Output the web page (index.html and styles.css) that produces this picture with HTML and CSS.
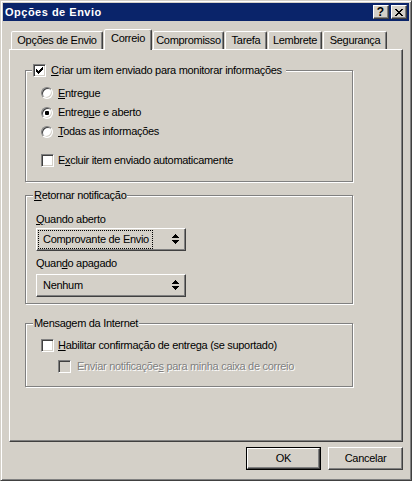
FILE: index.html
```html
<!DOCTYPE html>
<html>
<head>
<meta charset="utf-8">
<title>Opções de Envio</title>
<link rel="stylesheet" href="styles.css">
</head>
<body>
<div class="window">
  <div class="titlebar">
    <span class="title">Opções de Envio</span>
    <div class="title-buttons">
      <span class="tbtn help">?</span>
      <span class="tbtn close">
        <svg width="8" height="7" viewBox="0 0 8 7" shape-rendering="crispEdges">
          <path d="M0 0h2v1h-2z M6 0h2v1h-2z M1 1h2v1h-2z M5 1h2v1h-2z M2 2h4v1h-4z M3 3h2v1h-2z M2 4h4v1h-4z M1 5h2v1h-2z M5 5h2v1h-2z M0 6h2v1h-2z M6 6h2v1h-2z" fill="#000"/>
        </svg>
      </span>
    </div>
  </div>
  <div class="body">
    <div class="tabs">
      <div class="tab t-envio">Opções de Envio</div>
      <div class="tab t-correio selected">Correio</div>
      <div class="tab t-comp">Compromisso</div>
      <div class="tab t-tarefa">Tarefa</div>
      <div class="tab t-lemb">Lembrete</div>
      <div class="tab t-seg">Segurança</div>
    </div>
    <div class="panel">
      <fieldset class="group g-track">
        <legend class="legend-check">
          <span class="check">
            <span class="box checked">
              <svg width="7" height="7" viewBox="0 0 7 7" shape-rendering="crispEdges"><path d="M0 2h1v3h-1z M1 3h1v3h-1z M2 4h1v3h-1z M3 3h1v3h-1z M4 2h1v3h-1z M5 1h1v3h-1z M6 0h1v3h-1z" fill="#000"/></svg>
            </span>
            <span class="lbl"><u>C</u>riar um item enviado para monitorar informações</span>
          </span>
        </legend>
        <div class="row r1"><span class="ctl"><span class="radio"></span></span><span class="lbl"><u>E</u>ntregue</span></div>
        <div class="row r2"><span class="ctl"><span class="radio on"></span></span><span class="lbl">Entreg<u>u</u>e e aberto</span></div>
        <div class="row r3"><span class="ctl"><span class="radio"></span></span><span class="lbl"><u>T</u>odas as informações</span></div>
        <div class="row r4"><span class="ctl"><span class="box"></span></span><span class="lbl">E<u>x</u>cluir item enviado automaticamente</span></div>
      </fieldset>

      <fieldset class="group g-notify">
        <legend class="legend-text"><u>R</u>etornar notificação</legend>
        <div class="field-label fl1"><u>Q</u>uando aberto</div>
        <div class="combo">
          <span class="combo-text focus">Comprovante de Envio</span>
          <svg class="spin" width="7" height="11" viewBox="0 0 7 11" shape-rendering="crispEdges"><path d="M3 0h1v1h-1z M2 1h3v1h-3z M1 2h5v1h-5z M0 3h7v1h-7z M0 6h7v1h-7z M1 7h5v1h-5z M2 8h3v1h-3z M3 9h1v1h-1z" fill="#000"/></svg>
        </div>
        <div class="field-label fl2">Quan<u>d</u>o apagado</div>
        <div class="combo">
          <span class="combo-text">Nenhum</span>
          <svg class="spin" width="7" height="11" viewBox="0 0 7 11" shape-rendering="crispEdges"><path d="M3 0h1v1h-1z M2 1h3v1h-3z M1 2h5v1h-5z M0 3h7v1h-7z M0 6h7v1h-7z M1 7h5v1h-5z M2 8h3v1h-3z M3 9h1v1h-1z" fill="#000"/></svg>
        </div>
      </fieldset>

      <fieldset class="group g-internet">
        <legend class="legend-text">Mensagem da Internet</legend>
        <div class="row i1"><span class="ctl"><span class="box"></span></span><span class="lbl"><u>H</u>abilitar confirmação de entrega (se suportado)</span></div>
        <div class="row i2 disabled"><span class="ctl"><span class="box dis"></span></span><span class="lbl">Enviar notificaçõe<u>s</u> para minha caixa de correio</span></div>
      </fieldset>
    </div>
    <div class="buttons">
      <div class="btn default"><span class="btn-inner">OK</span></div>
      <div class="btn"><span class="btn-inner">Cancelar</span></div>
    </div>
  </div>
</div>
</body>
</html>
```
FILE: styles.css
```css
* { box-sizing: border-box; }
html, body { margin: 0; padding: 0; }
body {
  font-family: "Liberation Sans", Arial, sans-serif;
  font-size: 11px;
  line-height: 13px;
  letter-spacing: -0.3px;
  color: #000;
  background: #d4d0c8;
}
u { text-decoration: underline; text-underline-offset: 1px; }

.window {
  width: 412px;
  height: 481px;
  background: #d4d0c8;
  border: 1px solid;
  border-color: #d4d0c8 #404040 #404040 #d4d0c8;
  box-shadow: inset 1px 1px #fff, inset -1px -1px #808080;
  padding: 2px;
  display: flex;
  flex-direction: column;
}

/* title bar */
.titlebar {
  height: 18px;
  background: #0a246a;
  display: flex;
  align-items: center;
  padding: 0 2px 0 2px;
}
.title {
  color: #fff;
  font-weight: bold;
  font-size: 11px;
  letter-spacing: 0.5px;
}
.title-buttons {
  margin-left: auto;
  display: flex;
  gap: 2px;
}
.tbtn {
  width: 16px;
  height: 14px;
  background: #d4d0c8;
  border: 1px solid;
  border-color: #fff #404040 #404040 #fff;
  box-shadow: inset -1px -1px #808080;
  display: flex;
  align-items: center;
  justify-content: center;
  letter-spacing: 0;
}
.tbtn.help {
  font-weight: bold;
  font-size: 12px;
  line-height: 12px;
  padding-right: 1px;
}
.tbtn.close svg { margin-right: 1px; }

/* body */
.body {
  flex: 1;
  display: flex;
  flex-direction: column;
  padding: 8px 6px 8px 6px;
}

/* tabs */
.tabs {
  display: flex;
  align-items: flex-end;
  height: 20px;
  padding-left: 2px;
  gap: 1px;
  position: relative;
  z-index: 1;
}
.tab {
  height: 18px;
  border: 1px solid;
  border-bottom: 0;
  border-color: #fff #404040 transparent #fff;
  border-radius: 2px 2px 0 0;
  box-shadow: inset -1px 0 #808080;
  background: #d4d0c8;
  display: flex;
  align-items: center;
  justify-content: center;
  white-space: nowrap;
}
.tab.selected {
  height: 21px;
  margin-bottom: -1px;
  padding-bottom: 3px;
}
.t-envio { width: 92px; }
.t-correio { width: 48px; }
.t-comp { width: 71px; }
.t-tarefa { width: 42px; }
.t-lemb { width: 54px; }
.t-seg { width: 64px; }

/* panel */
.panel {
  height: 393px;
  border: 1px solid;
  border-color: #fff #404040 #404040 #fff;
  box-shadow: inset -1px -1px #808080;
  padding: 14px 0 0 15px;
  display: flex;
  flex-direction: column;
}

/* group boxes */
.group {
  width: 328px;
  margin: 0;
  min-width: 0;
  border: 1px solid #808080;
  box-shadow: inset 1px 1px #fff, 1px 1px #fff;
  padding: 0 10px 0 15px;
}
.group legend {
  background: #d4d0c8;
  line-height: 13px;
  white-space: nowrap;
}
.legend-check {
  margin-left: -9px;
  padding: 0 4px 0 1px;
}
.legend-text {
  padding: 0 1px;
}

.check {
  display: flex;
  align-items: center;
  gap: 5px;
  height: 13px;
}

.row {
  display: flex;
  align-items: center;
  gap: 4px;
  height: 20px;
  white-space: nowrap;
}
.ctl {
  width: 13px;
  height: 13px;
  display: flex;
  align-items: center;
  justify-content: flex-start;
  flex: none;
}

.g-track { padding-top: 6px; padding-bottom: 11px; height: 118px; }
.g-track .r2, .g-track .r3 { height: 19px; }
.g-track .r4 { margin-top: 9px; }

.box {
  width: 13px;
  height: 13px;
  background: #fff;
  border: 1px solid;
  border-color: #808080 #fff #fff #808080;
  box-shadow: inset 1px 1px #404040, inset -1px -1px #d4d0c8;
  display: flex;
  align-items: center;
  justify-content: center;
  flex: none;
}
.box.dis { background: #d4d0c8; }

.radio {
  width: 12px;
  height: 12px;
  border-radius: 50%;
  background: #fff;
  border: 1px solid;
  border-color: #808080 #fff #fff #808080;
  box-shadow: inset 1px 1px #404040, inset -1px -1px #d4d0c8;
  position: relative;
  flex: none;
}
.radio.on::after {
  content: "";
  position: absolute;
  left: 3px;
  top: 3px;
  width: 4px;
  height: 4px;
  background: #000;
  border-radius: 1px;
}

/* notify group */
.g-notify {
  margin-top: 7px;
  padding: 11px 10px 6px 10px;
}
.g-notify .legend-text { margin-left: -3px; }
.field-label { height: 13px; white-space: nowrap; }
.fl1 { margin-bottom: 2px; }
.fl2 { margin-top: 6px; margin-bottom: 4px; }
.combo {
  width: 150px;
  height: 23px;
  background: #d4d0c8;
  border: 1px solid;
  border-color: #fff #404040 #404040 #fff;
  box-shadow: inset -1px -1px #808080;
  display: flex;
  align-items: center;
  padding: 0 6px 0 1px;
}
.combo-text {
  padding: 2px 3px 2px 4px;
  border: 1px dotted transparent;
  white-space: nowrap;
}
.combo-text.focus { border-color: #000; }
.spin { margin-left: auto; flex: none; }

/* internet group */
.g-internet {
  margin-top: 13px;
  padding: 5px 10px 10px 15px;
}
.g-internet .legend-text { margin-left: -8px; }
.i2 { margin-top: 1px; padding-left: 17px; gap: 6px; }
.disabled .lbl {
  color: #808080;
  text-shadow: 1px 1px #fff;
}

/* dialog buttons */
.buttons {
  margin-top: 5px;
  display: flex;
  justify-content: flex-end;
  gap: 7px;
}
.btn {
  width: 75px;
  height: 23px;
  border: 1px solid;
  border-color: #fff #404040 #404040 #fff;
  box-shadow: inset -1px -1px #808080;
  display: flex;
  align-items: center;
  justify-content: center;
}
.btn.default {
  border: 1px solid #000;
  box-shadow: none;
  padding: 0;
}
.btn.default .btn-inner {
  width: 100%;
  height: 100%;
  border: 1px solid;
  border-color: #fff #404040 #404040 #fff;
  box-shadow: inset -1px -1px #808080;
  display: flex;
  align-items: center;
  justify-content: center;
}
```
